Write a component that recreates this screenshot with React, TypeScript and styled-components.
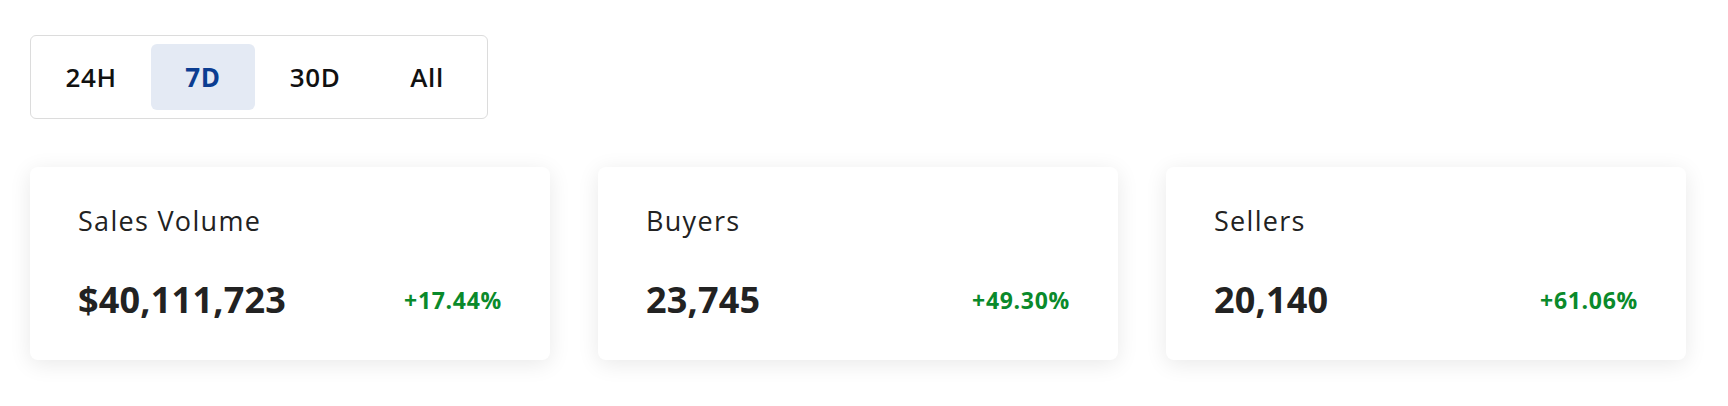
import styled, { createGlobalStyle } from "styled-components";

const GlobalStyle = createGlobalStyle`
  body {
    margin: 0;
    background: #fff;
    font-family: "Open Sans", "Noto Sans", sans-serif;
    color: #212121;
  }
`;

const Page = styled.div`
  padding: 35px 42px 40px 30px;
  display: flex;
  flex-direction: column;
  align-items: flex-start;
  gap: 48px;
`;

const RangeGroup = styled.div`
  display: flex;
  gap: 8px;
  padding: 8px;
  border: 1px solid #dcdcdc;
  border-radius: 6px;
  background: #fff;
`;

const RangeButton = styled.button<{ $active?: boolean }>`
  width: 104px;
  height: 66px;
  border: none;
  border-radius: 6px;
  font-family: inherit;
  font-size: 26px;
  font-weight: ${(p) => (p.$active ? 700 : 600)};
  letter-spacing: 0.6px;
  color: ${(p) => (p.$active ? "#0b3d91" : "#111")};
  background: ${(p) => (p.$active ? "#e4eaf4" : "transparent")};
  cursor: pointer;
`;

const CardRow = styled.div`
  align-self: stretch;
  display: grid;
  grid-template-columns: repeat(3, 1fr);
  gap: 48px;
`;

const Card = styled.div`
  height: 193px;
  box-sizing: border-box;
  padding: 36px 48px 0 48px;
  background: #fff;
  border-radius: 8px;
  box-shadow: 0 4px 22px rgba(0, 0, 0, 0.09);
  display: flex;
  flex-direction: column;
`;

const Label = styled.div`
  font-size: 27px;
  line-height: 36px;
  letter-spacing: 1.3px;
  color: #222;
`;

const StatLine = styled.div`
  margin-top: 37px;
  display: flex;
  align-items: center;
  justify-content: space-between;
`;

const Value = styled.div`
  font-size: 36px;
  line-height: 48px;
  font-weight: 700;
  letter-spacing: 0.2px;
  color: #222;
`;

const Change = styled.div<{ $up?: boolean }>`
  font-size: 23px;
  font-weight: 700;
  letter-spacing: 0.7px;
  color: ${(p) => (p.$up ? "#0a8a2b" : "#c62828")};
`;

const ranges = ["24H", "7D", "30D", "All"];

const stats = [
  { label: "Sales Volume", value: "$40,111,723", change: "+17.44%" },
  { label: "Buyers", value: "23,745", change: "+49.30%" },
  { label: "Sellers", value: "20,140", change: "+61.06%" },
];

export default function App() {
  return (
    <>
      <GlobalStyle />
      <Page>
        <RangeGroup>
          {ranges.map((r) => (
            <RangeButton key={r} $active={r === "7D"}>
              {r}
            </RangeButton>
          ))}
        </RangeGroup>
        <CardRow>
          {stats.map((s) => (
            <Card key={s.label}>
              <Label>{s.label}</Label>
              <StatLine>
                <Value>{s.value}</Value>
                <Change $up={s.change.startsWith("+")}>{s.change}</Change>
              </StatLine>
            </Card>
          ))}
        </CardRow>
      </Page>
    </>
  );
}
